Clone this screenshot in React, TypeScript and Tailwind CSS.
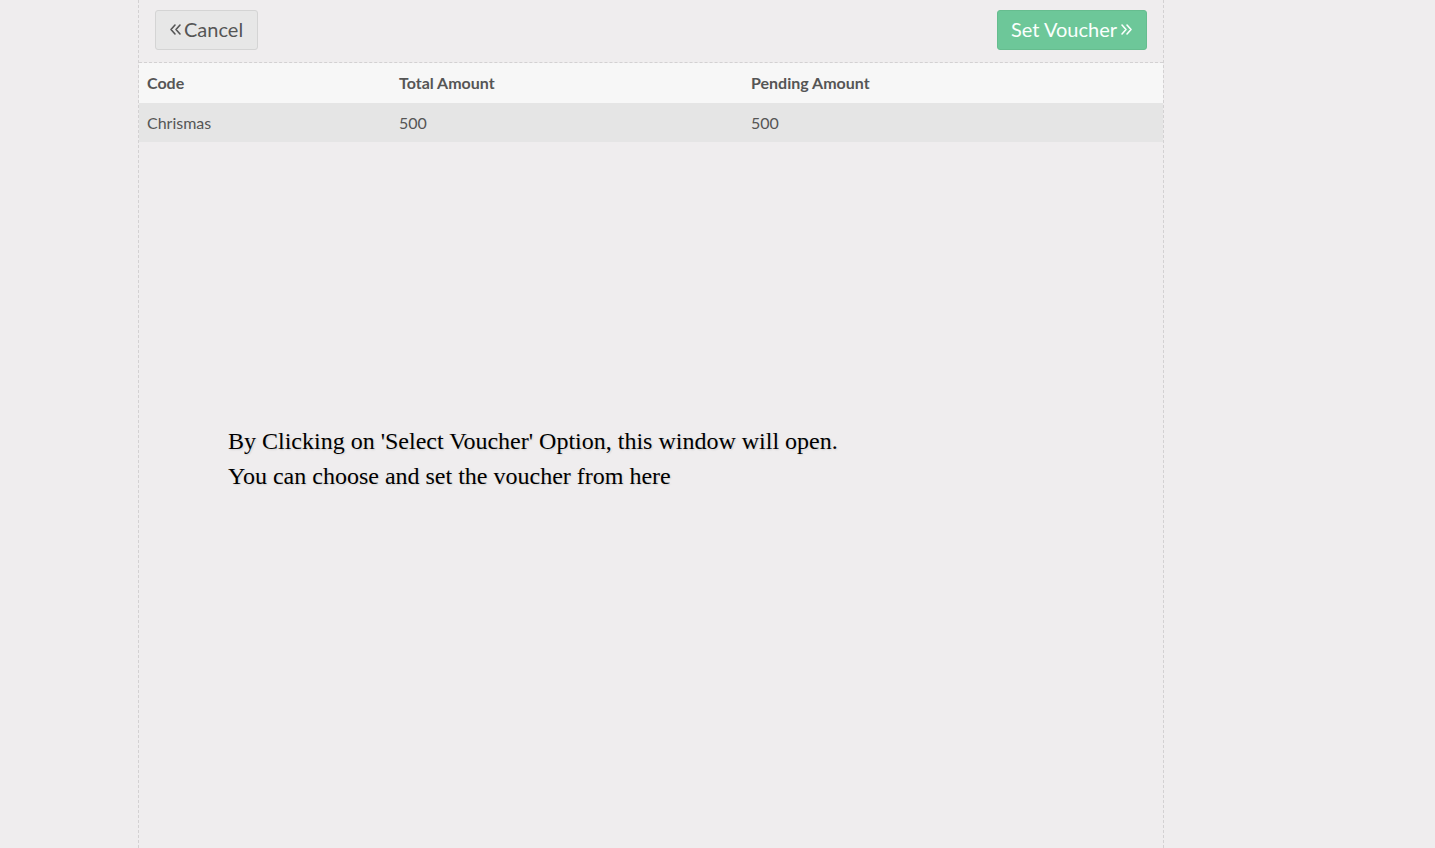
function DoubleAngle({ dir }: { dir: "left" | "right" }) {
    const d =
        dir === "left"
            ? "M6 2 L2 6.5 L6 11 M11 2 L7 6.5 L11 11"
            : "M2 2 L6 6.5 L2 11 M7 2 L11 6.5 L7 11";
    return (
        <svg width="13" height="13" viewBox="0 0 13 13" className="shrink-0">
            <path d={d} fill="none" stroke="currentColor" strokeWidth="1.6" strokeLinecap="round" strokeLinejoin="round" />
        </svg>
    );
}

export default function App() {
    const rows = [{ code: "Chrismas", total: "500", pending: "500" }];
    return (
        <div className="min-h-[848px] w-full bg-[#efedee] font-['Lato',sans-serif]">
            <div className="ml-[138px] w-[1026px] min-h-[848px] border-x border-dashed border-[#d3d1d2] flex flex-col">
                <div className="h-[63px] flex flex-row items-start justify-between px-4 pt-[10px] border-b border-dashed border-[#d3d1d2]">
                    <button className="h-[40px] pl-[13px] pr-[14px] pb-[2px] flex flex-row items-center gap-[2px] rounded-[3px] border border-[#d4d4d4] bg-[#e7e7e7] text-[20px] text-[#555]">
                        <DoubleAngle dir="left" />
                        Cancel
                    </button>
                    <button className="h-[40px] pl-[13px] pr-[13px] pb-[2px] flex flex-row items-center gap-[3px] rounded-[3px] border border-[#66bd8f] bg-[#6dc799] text-[20px] text-[#fbfffd]">
                        Set Voucher
                        <DoubleAngle dir="right" />
                    </button>
                </div>
                <table className="w-full text-[16px] text-[#555] border-collapse">
                    <thead>
                        <tr className="bg-[#f7f7f7] h-[40px]">
                            <th className="w-[252px] text-left font-bold px-2">Code</th>
                            <th className="w-[352px] text-left font-bold px-2">Total Amount</th>
                            <th className="text-left font-bold px-2">Pending Amount</th>
                        </tr>
                    </thead>
                    <tbody>
                        {rows.map((row) => {
                            return (
                                <tr key={row.code} className="bg-[#e5e5e5] h-[39px]">
                                    <td className="px-2">{row.code}</td>
                                    <td className="px-2">{row.total}</td>
                                    <td className="px-2">{row.pending}</td>
                                </tr>
                            );
                        })}
                    </tbody>
                </table>
                <div className="mt-[282px] ml-[89px] font-['Liberation_Serif',serif] text-[24px] leading-[35px] text-black [text-shadow:1px_1px_2px_rgba(0,0,0,0.12)]">
                    <p>By Clicking on 'Select Voucher' Option, this window will open.</p>
                    <p>You can choose and set the voucher from here</p>
                </div>
            </div>
        </div>
    );
}
